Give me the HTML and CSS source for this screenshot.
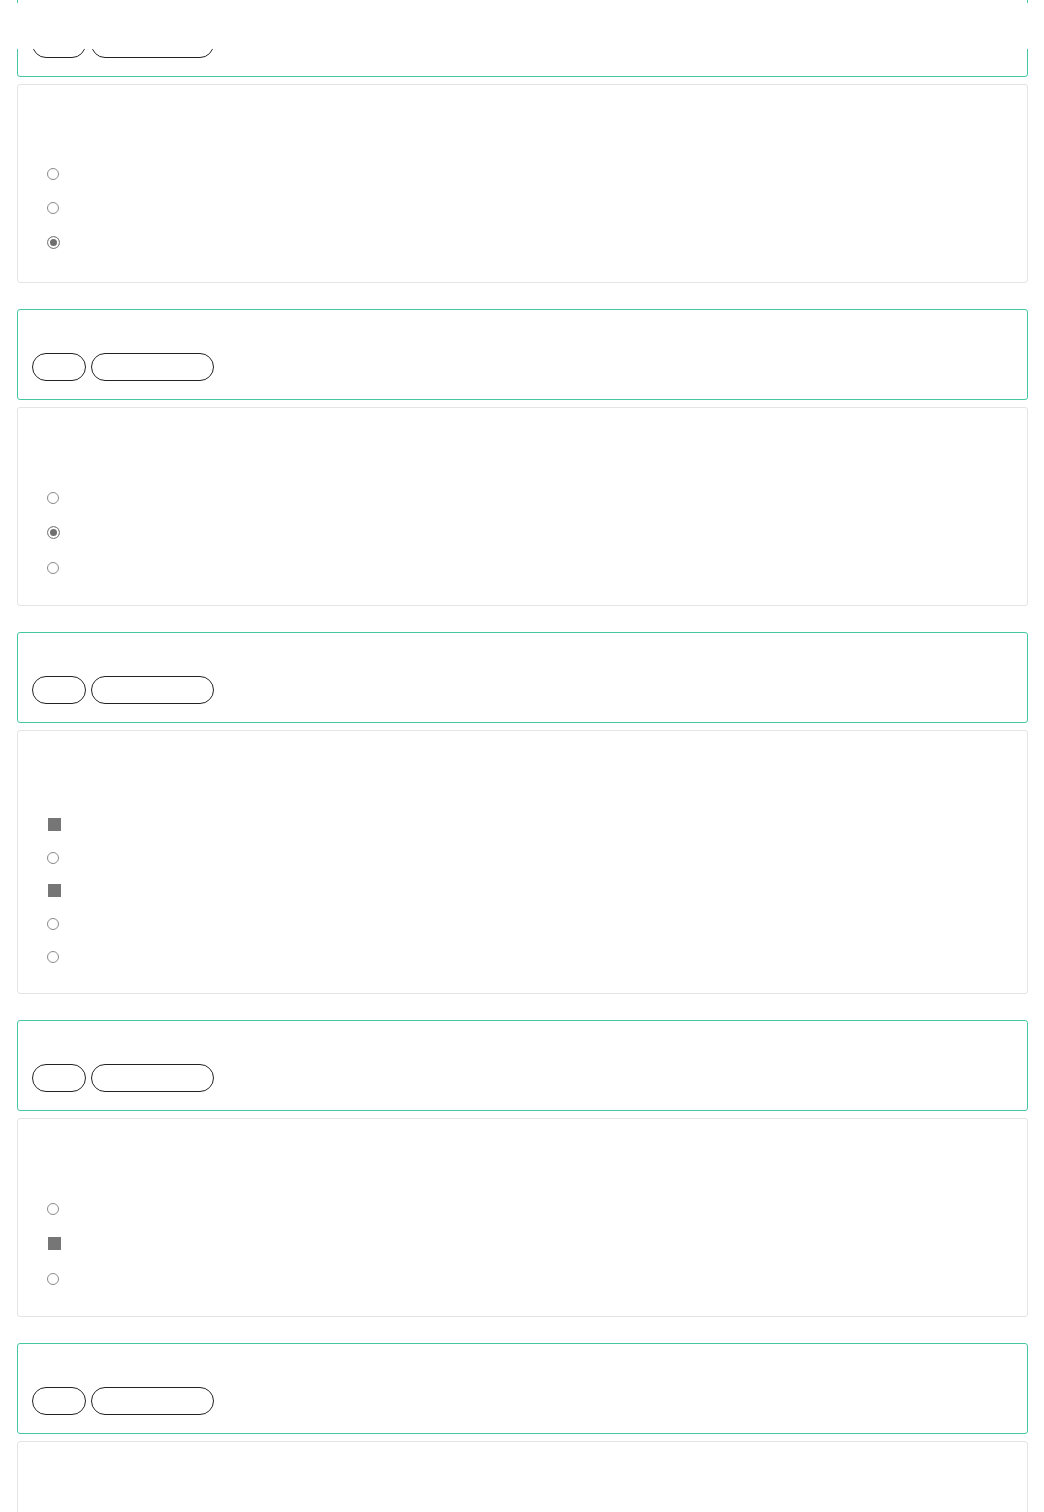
FILE: index.html
```html
<!DOCTYPE html>
<html>
<head>
    <title>Quiz review</title>
    <link rel="stylesheet" href="styles.css">
</head>
<body>
<div class="topbar"></div>

<div class="quiz">

    <div class="q-head">
        <div class="q-title"></div>
        <div class="tags"><span class="tag"></span><span class="tag wide"></span></div>
    </div>
    <div class="q-body first">
        <div class="q-text first"></div>
        <label class="opt tight"><input type="radio" name="q1" disabled></label>
        <label class="opt"><input type="radio" name="q1" disabled></label>
        <label class="opt"><input type="radio" name="q1" checked disabled></label>
    </div>

    <div class="q-head">
        <div class="q-title"></div>
        <div class="tags"><span class="tag"></span><span class="tag wide"></span></div>
    </div>
    <div class="q-body">
        <div class="q-text"></div>
        <label class="opt"><input type="radio" name="q2" disabled></label>
        <label class="opt"><input type="radio" name="q2" checked disabled></label>
        <label class="opt"><input type="radio" name="q2" disabled></label>
    </div>

    <div class="q-head">
        <div class="q-title"></div>
        <div class="tags"><span class="tag"></span><span class="tag wide"></span></div>
    </div>
    <div class="q-body">
        <div class="q-text tall"></div>
        <label class="opt short"><input type="checkbox" checked disabled></label>
        <label class="opt short"><input type="checkbox" disabled></label>
        <label class="opt short"><input type="checkbox" checked disabled></label>
        <label class="opt short"><input type="checkbox" disabled></label>
        <label class="opt short"><input type="checkbox" disabled></label>
    </div>

    <div class="q-head">
        <div class="q-title"></div>
        <div class="tags"><span class="tag"></span><span class="tag wide"></span></div>
    </div>
    <div class="q-body">
        <div class="q-text"></div>
        <label class="opt"><input type="checkbox" disabled></label>
        <label class="opt"><input type="checkbox" checked disabled></label>
        <label class="opt"><input type="checkbox" disabled></label>
    </div>

    <div class="q-head">
        <div class="q-title"></div>
        <div class="tags"><span class="tag"></span><span class="tag wide"></span></div>
    </div>
    <div class="q-body">
        <div class="q-text"></div>
        <label class="opt"><input type="radio" name="q5" disabled></label>
        <label class="opt"><input type="radio" name="q5" disabled></label>
        <label class="opt"><input type="radio" name="q5" disabled></label>
    </div>

</div>
</body>
</html>
```

FILE: styles.css
```css
body {
    margin: 0;
    background: #fff;
    font-family: "Liberation Sans", Arial, sans-serif;
}

/* sticky bar over the top of the list */
.topbar {
    position: fixed;
    top: 3px;
    left: 0;
    right: 0;
    height: 46px;
    background: #fff;
    z-index: 10;
}

.quiz {
    margin-top: -14px;
    padding: 0 16px 0 17px;
}

.q-head {
    border: 1px solid #46c7a2;
    border-radius: 3px;
    padding: 14px 14px 18px;
    margin-bottom: 7px;
}

.q-title {
    height: 29px;
}

.tags {
    display: flex;
    gap: 5px;
}

.tag {
    display: inline-block;
    width: 52px;
    height: 26px;
    border: 1px solid #222;
    border-radius: 14px;
}

.tag.wide {
    width: 121px;
}

.q-body {
    border: 1px solid #e4e4e4;
    border-radius: 3px;
    padding: 20px 29px 20px;
    margin-bottom: 26px;
}

.q-body.first {
    padding-bottom: 22px;
}

.q-text {
    height: 52px;
}

.q-text.first {
    height: 53px;
}

.q-text.tall {
    height: 57px;
}

.opt {
    display: flex;
    align-items: center;
    height: 35px;
}

.opt.tight {
    height: 32px;
}

.opt.short {
    height: 33px;
}

.opt input {
    appearance: none;
    -webkit-appearance: none;
    margin: 0;
    width: 12px;
    height: 12px;
    border: 1px solid #8a8a8a;
    border-radius: 50%;
    background: #fff;
}

.opt input[type="radio"]:checked {
    width: 13px;
    height: 13px;
    border-color: #858585;
    background: #6f6f6f;
    box-shadow: inset 0 0 0 2px #fff;
}

.opt input[type="checkbox"]:checked {
    width: 13px;
    height: 13px;
    margin-left: 1px;
    border: none;
    border-radius: 0;
    background: #767676;
}
```
